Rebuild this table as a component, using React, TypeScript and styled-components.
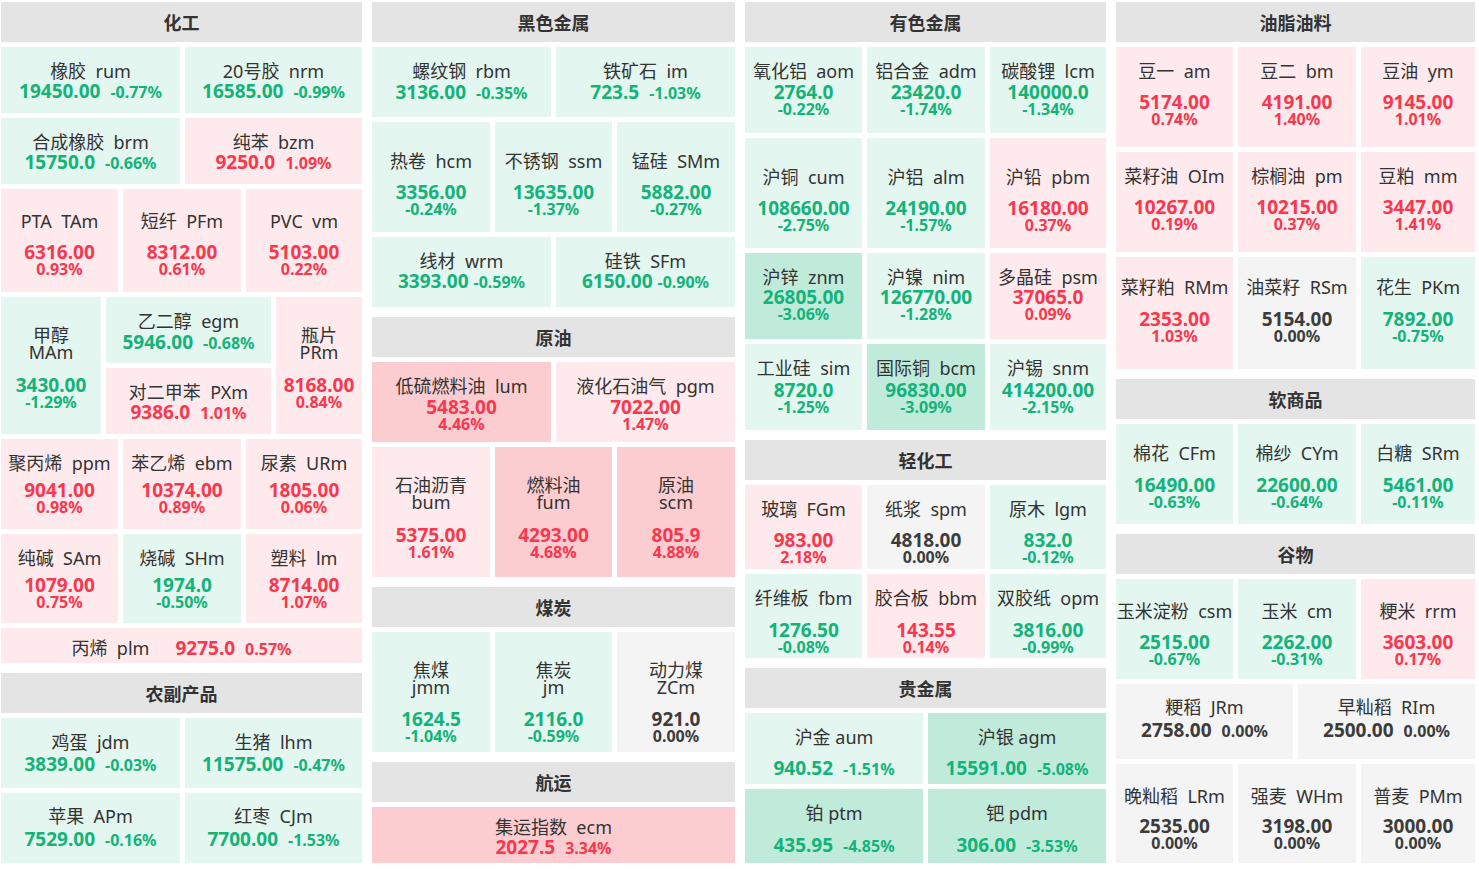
import React from "react";
import styled, { createGlobalStyle } from "styled-components";

type Quote = { n: string; c: string; p: string; r: string; w: number };
type Mode = "inline" | "stack" | "wrap" | "line";
type Nest = { w: number; rows: RowSpec[] };
type RowSpec = {
  h: number;
  mode: Mode;
  pt?: number;
  gap?: number;
  vg?: number;
  sep?: string;
  cells: (Quote | Nest)[];
};
type GroupSpec = { title: string; rows: RowSpec[] };

const q = (n: string, c: string, p: string, r: string, w = 1): Quote => ({ n, c, p, r, w });

const columns: GroupSpec[][] = [
  [
    {
      title: "化工",
      rows: [
        { h: 66, mode: "inline", pt: 13, gap: 0, cells: [q("橡胶", "rum", "19450.00", "-0.77%", 179), q("20号胶", "nrm", "16585.00", "-0.99%", 177)] },
        { h: 66, mode: "inline", pt: 13, gap: 0, cells: [q("合成橡胶", "brm", "15750.0", "-0.66%", 179), q("纯苯", "bzm", "9250.0", "1.09%", 177)] },
        { h: 103, mode: "stack", pt: 21, gap: 11, cells: [q("PTA", "TAm", "6316.00", "0.93%", 117), q("短纤", "PFm", "8312.00", "0.61%", 118), q("PVC", "vm", "5103.00", "0.22%", 116)] },
        {
          h: 137,
          mode: "wrap",
          pt: 30,
          gap: 15,
          cells: [
            q("甲醇", "MAm", "3430.00", "-1.29%", 100),
            {
              w: 165,
              rows: [
                { h: 66, mode: "inline", pt: 13, gap: 1, cells: [q("乙二醇", "egm", "5946.00", "-0.68%")] },
                { h: 66, mode: "inline", pt: 13, gap: 0, cells: [q("对二甲苯", "PXm", "9386.0", "1.01%")] },
              ],
            },
            q("瓶片", "PRm", "8168.00", "0.84%", 86),
          ],
        },
        { h: 90, mode: "stack", pt: 13, gap: 7, cells: [q("聚丙烯", "ppm", "9041.00", "0.98%", 117), q("苯乙烯", "ebm", "10374.00", "0.89%", 118), q("尿素", "URm", "1805.00", "0.06%", 116)] },
        { h: 89, mode: "stack", pt: 13, gap: 7, cells: [q("纯碱", "SAm", "1079.00", "0.75%", 117), q("烧碱", "SHm", "1974.0", "-0.50%", 118), q("塑料", "lm", "8714.00", "1.07%", 116)] },
        { h: 35, mode: "line", pt: 9, cells: [q("丙烯", "plm", "9275.0", "0.57%")] },
      ],
    },
    {
      title: "农副产品",
      rows: [
        { h: 70, mode: "inline", pt: 13, gap: 2, cells: [q("鸡蛋", "jdm", "3839.00", "-0.03%", 179), q("生猪", "lhm", "11575.00", "-0.47%", 177)] },
        { h: 70, mode: "inline", pt: 12, gap: 3, cells: [q("苹果", "APm", "7529.00", "-0.16%", 179), q("红枣", "CJm", "7700.00", "-1.53%", 177)] },
      ],
    },
  ],
  [
    {
      title: "黑色金属",
      rows: [
        { h: 70, mode: "inline", pt: 13, gap: 1, cells: [q("螺纹钢", "rbm", "3136.00", "-0.35%", 179), q("铁矿石", "im", "723.5", "-1.03%", 179)] },
        { h: 110, mode: "stack", pt: 28, gap: 11, cells: [q("热卷", "hcm", "3356.00", "-0.24%", 118), q("不锈钢", "ssm", "13635.00", "-1.37%", 117), q("锰硅", "SMm", "5882.00", "-0.27%", 118)] },
        { h: 70, mode: "inline", pt: 13, gap: 0, vg: 5, cells: [q("线材", "wrm", "3393.00", "-0.59%", 179), q("硅铁", "SFm", "6150.00", "-0.90%", 179)] },
      ],
    },
    {
      title: "原油",
      rows: [
        { h: 80, mode: "stack", pt: 13, gap: 1, cells: [q("低硫燃料油", "lum", "5483.00", "4.46%", 179), q("液化石油气", "pgm", "7022.00", "1.47%", 179)] },
        { h: 130, mode: "wrap", pt: 30, gap: 15, cells: [q("石油沥青", "bum", "5375.00", "1.61%", 118), q("燃料油", "fum", "4293.00", "4.68%", 117), q("原油", "scm", "805.9", "4.88%", 118)] },
      ],
    },
    {
      title: "煤炭",
      rows: [
        { h: 120, mode: "wrap", pt: 30, gap: 14, cells: [q("焦煤", "jmm", "1624.5", "-1.04%", 118), q("焦炭", "jm", "2116.0", "-0.59%", 117), q("动力煤", "ZCm", "921.0", "0.00%", 118)] },
      ],
    },
    {
      title: "航运",
      rows: [{ h: 56, mode: "inline", pt: 9, gap: 0, cells: [q("集运指数", "ecm", "2027.5", "3.34%")] }],
    },
  ],
  [
    {
      title: "有色金属",
      rows: [
        { h: 86, mode: "stack", pt: 13, gap: 1, cells: [q("氧化铝", "aom", "2764.0", "-0.22%", 117), q("铝合金", "adm", "23420.0", "-1.74%", 118), q("碳酸锂", "lcm", "140000.0", "-1.34%", 116)] },
        { h: 110, mode: "stack", pt: 28, gap: 11, cells: [q("沪铜", "cum", "108660.00", "-2.75%", 117), q("沪铝", "alm", "24190.00", "-1.57%", 118), q("沪铅", "pbm", "16180.00", "0.37%", 116)] },
        { h: 86, mode: "stack", pt: 13, gap: 0, cells: [q("沪锌", "znm", "26805.00", "-3.06%", 117), q("沪镍", "nim", "126770.00", "-1.28%", 118), q("多晶硅", "psm", "37065.0", "0.09%", 116)] },
        { h: 86, mode: "stack", pt: 13, gap: 2, cells: [q("工业硅", "sim", "8720.0", "-1.25%", 117), q("国际铜", "bcm", "96830.00", "-3.09%", 118), q("沪锡", "snm", "414200.00", "-2.15%", 116)] },
      ],
    },
    {
      title: "轻化工",
      rows: [
        { h: 84, mode: "stack", pt: 13, gap: 11, cells: [q("玻璃", "FGm", "983.00", "2.18%", 117), q("纸浆", "spm", "4818.00", "0.00%", 118), q("原木", "lgm", "832.0", "-0.12%", 116)] },
        { h: 84, mode: "stack", pt: 13, gap: 12, cells: [q("纤维板", "fbm", "1276.50", "-0.08%", 117), q("胶合板", "bbm", "143.55", "0.14%", 118), q("双胶纸", "opm", "3816.00", "-0.99%", 116)] },
      ],
    },
    {
      title: "贵金属",
      rows: [
        { h: 71, mode: "inline", pt: 13, gap: 11, sep: " ", cells: [q("沪金", "aum", "940.52", "-1.51%", 178), q("沪银", "agm", "15591.00", "-5.08%", 178)] },
        { h: 74, mode: "inline", pt: 13, gap: 12, sep: " ", cells: [q("铂", "ptm", "435.95", "-4.85%", 178), q("钯", "pdm", "306.00", "-3.53%", 178)] },
      ],
    },
  ],
  [
    {
      title: "油脂油料",
      rows: [
        { h: 100, mode: "stack", pt: 13, gap: 11, cells: [q("豆一", "am", "5174.00", "0.74%", 117), q("豆二", "bm", "4191.00", "1.40%", 118), q("豆油", "ym", "9145.00", "1.01%", 114)] },
        { h: 100, mode: "stack", pt: 13, gap: 11, cells: [q("菜籽油", "OIm", "10267.00", "0.19%", 117), q("棕榈油", "pm", "10215.00", "0.37%", 118), q("豆粕", "mm", "3447.00", "1.41%", 114)] },
        { h: 112, mode: "stack", pt: 19, gap: 12, cells: [q("菜籽粕", "RMm", "2353.00", "1.03%", 117), q("油菜籽", "RSm", "5154.00", "0.00%", 118), q("花生", "PKm", "7892.00", "-0.75%", 114)] },
      ],
    },
    {
      title: "软商品",
      rows: [
        { h: 100, mode: "stack", pt: 18, gap: 12, cells: [q("棉花", "CFm", "16490.00", "-0.63%", 117), q("棉纱", "CYm", "22600.00", "-0.64%", 118), q("白糖", "SRm", "5461.00", "-0.11%", 114)] },
      ],
    },
    {
      title: "谷物",
      rows: [
        { h: 100, mode: "stack", pt: 21, gap: 11, cells: [q("玉米淀粉", "csm", "2515.00", "-0.67%", 117), q("玉米", "cm", "2262.00", "-0.31%", 118), q("粳米", "rrm", "3603.00", "0.17%", 114)] },
        { h: 75, mode: "inline", pt: 12, gap: 3, cells: [q("粳稻", "JRm", "2758.00", "0.00%", 177), q("早籼稻", "RIm", "2500.00", "0.00%", 177)] },
        { h: 99, mode: "stack", pt: 21, gap: 10, cells: [q("晚籼稻", "LRm", "2535.00", "0.00%", 117), q("强麦", "WHm", "3198.00", "0.00%", 118), q("普麦", "PMm", "3000.00", "0.00%", 114)] },
      ],
    },
  ],
];

type Trend = "up" | "upStrong" | "down" | "downStrong" | "flat";

const trendOf = (r: string): Trend => {
  const v = parseFloat(r);
  if (v === 0) return "flat";
  if (v < 0) return v <= -3 ? "downStrong" : "down";
  return v >= 3 ? "upStrong" : "up";
};

const BG: Record<Trend, string> = {
  up: "#feeaec",
  upStrong: "#fccdd0",
  down: "#e3f6ef",
  downStrong: "#c0ebdb",
  flat: "#f4f4f4",
};

const FG: Record<Trend, string> = {
  up: "#f7384f",
  upStrong: "#f7384f",
  down: "#13b37a",
  downStrong: "#13b37a",
  flat: "#3c3c3c",
};

const GlobalStyle = createGlobalStyle`
  html, body {
    margin: 0;
    padding: 0;
    background: #ffffff;
  }
  body {
    font-family: "Noto Sans", "Noto Sans CJK SC", sans-serif;
  }
`;

const Board = styled.main`
  display: grid;
  grid-template-columns: 361px 363px 361px 359px;
  column-gap: 10px;
  align-items: start;
  padding: 2px 0 0 1px;
`;

const Column = styled.div`
  display: flex;
  flex-direction: column;
  gap: 10px;
`;

const Group = styled.section`
  display: flex;
  flex-direction: column;
  gap: 5px;
`;

const GroupTitle = styled.h2`
  margin: 0;
  height: 40px;
  background: #e4e4e4;
  color: #333333;
  font-family: "Noto Sans CJK SC", sans-serif;
  font-size: 18px;
  font-weight: 700;
  line-height: 40px;
  text-align: center;
`;

const Row = styled.div<{ $h: number }>`
  display: flex;
  gap: 5px;
  height: ${(p) => p.$h}px;
`;

const NestStack = styled.div<{ $w: number }>`
  flex: ${(p) => p.$w} 1 0;
  min-width: 0;
  display: flex;
  flex-direction: column;
  gap: 5px;
`;

const Tile = styled.div<{ $w: number; $bg: string; $pt: number; $line: boolean }>`
  flex: ${(p) => p.$w} 1 0;
  min-width: 0;
  box-sizing: border-box;
  background: ${(p) => p.$bg};
  padding-top: ${(p) => p.$pt}px;
  display: flex;
  flex-direction: ${(p) => (p.$line ? "row" : "column")};
  align-items: ${(p) => (p.$line ? "baseline" : "center")};
  justify-content: ${(p) => (p.$line ? "center" : "flex-start")};
`;

const Name = styled.div`
  font-size: 18px;
  line-height: 22px;
  color: #333333;
  white-space: pre;
`;

const WrapName = styled.div`
  display: flex;
  flex-direction: column;
  align-items: center;
  font-size: 18px;
  line-height: 17px;
  color: #333333;
  white-space: nowrap;
`;

const Price = styled.div<{ $color: string; $mt?: number }>`
  margin-top: ${(p) => p.$mt ?? 0}px;
  margin-left: 0;
  color: ${(p) => p.$color};
  font-size: 19px;
  font-weight: 700;
  line-height: 19px;
  white-space: nowrap;
`;

const Pct = styled.div<{ $color: string }>`
  color: ${(p) => p.$color};
  font-size: 16px;
  font-weight: 700;
  line-height: 15px;
  white-space: nowrap;
`;

const ValueRow = styled.div<{ $mt: number; $gap: number }>`
  margin-top: ${(p) => p.$mt}px;
  display: flex;
  align-items: baseline;
  gap: ${(p) => p.$gap}px;
  line-height: 20px;
`;

const LinePrice = styled(Price)`
  margin-left: 26px;
`;

const LinePct = styled(Pct)`
  margin-left: 10px;
`;

const isNest = (c: Quote | Nest): c is Nest => (c as Nest).rows !== undefined;

function QuoteTile({ item, row }: { item: Quote; row: RowSpec }) {
  const t = trendOf(item.r);
  const color = FG[t];
  const sep = row.sep ?? "  ";
  const pt = row.pt ?? 0;
  const gap = row.gap ?? 0;

  if (row.mode === "line") {
    return (
      <Tile $w={item.w} $bg={BG[t]} $pt={pt} $line>
        <Name>{item.n + sep + item.c}</Name>
        <LinePrice $color={color}>{item.p}</LinePrice>
        <LinePct $color={color}>{item.r}</LinePct>
      </Tile>
    );
  }

  return (
    <Tile $w={item.w} $bg={BG[t]} $pt={pt} $line={false}>
      {row.mode === "wrap" ? (
        <WrapName>
          <span>{item.n}</span>
          <span>{item.c}</span>
        </WrapName>
      ) : (
        <Name>{item.n + sep + item.c}</Name>
      )}
      {row.mode === "inline" ? (
        <ValueRow $mt={gap} $gap={row.vg ?? 10}>
          <Price $color={color}>{item.p}</Price>
          <Pct $color={color}>{item.r}</Pct>
        </ValueRow>
      ) : (
        <>
          <Price $color={color} $mt={gap}>
            {item.p}
          </Price>
          <Pct $color={color}>{item.r}</Pct>
        </>
      )}
    </Tile>
  );
}

function QuoteRow({ row }: { row: RowSpec }) {
  return (
    <Row $h={row.h}>
      {row.cells.map((cell, i) =>
        isNest(cell) ? (
          <NestStack key={i} $w={cell.w}>
            {cell.rows.map((r, j) => (
              <QuoteRow key={j} row={r} />
            ))}
          </NestStack>
        ) : (
          <QuoteTile key={i} item={cell} row={row} />
        )
      )}
    </Row>
  );
}

export default function App() {
  return (
    <>
      <GlobalStyle />
      <Board>
        {columns.map((groups, ci) => (
          <Column key={ci}>
            {groups.map((g) => (
              <Group key={g.title}>
                <GroupTitle>{g.title}</GroupTitle>
                {g.rows.map((r, ri) => (
                  <QuoteRow key={ri} row={r} />
                ))}
              </Group>
            ))}
          </Column>
        ))}
      </Board>
    </>
  );
}
